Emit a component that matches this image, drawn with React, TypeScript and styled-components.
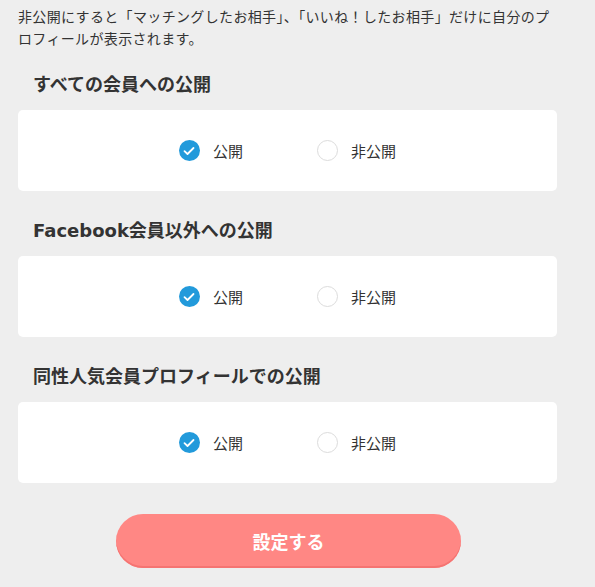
import styled, { createGlobalStyle } from 'styled-components';

type Choice = 'public' | 'private';

interface SectionData {
  title: string;
  value: Choice;
}

const sections: SectionData[] = [
  { title: 'すべての会員への公開', value: 'public' },
  { title: 'Facebook会員以外への公開', value: 'public' },
  { title: '同性人気会員プロフィールでの公開', value: 'public' },
];

function RadioOption({ label, checked }: { label: string; checked: boolean }) {
  return (
    <S.Option>
      <S.Circle $checked={checked}>
        {checked && (
          <svg width="12" height="10" viewBox="0 0 12 10">
            <path d="M1.5 5.2 L4.5 8 L10.5 2" fill="none" stroke="#fff" strokeWidth="1.8" strokeLinecap="round" strokeLinejoin="round" />
          </svg>
        )}
      </S.Circle>
      <S.Label>{label}</S.Label>
    </S.Option>
  );
}

export default function App() {
  return (
    <S.Page>
      <GlobalStyle />
      <S.Intro>
        非公開にすると「マッチングしたお相手」、「いいね！したお相手」だけに自分のプロフィールが表示されます。
      </S.Intro>
      {sections.map((s) => (
        <S.Section key={s.title}>
          <S.Heading>{s.title}</S.Heading>
          <S.Card>
            <RadioOption label="公開" checked={s.value === 'public'} />
            <RadioOption label="非公開" checked={s.value === 'private'} />
          </S.Card>
        </S.Section>
      ))}
      <S.ButtonRow>
        <S.Submit>設定する</S.Submit>
      </S.ButtonRow>
    </S.Page>
  );
}

const GlobalStyle = createGlobalStyle`
  html, body {
    margin: 0;
    padding: 0;
    background: #eeeeee;
  }
  body {
    font-family: "Liberation Sans", "Noto Sans CJK JP", sans-serif;
    color: #333;
  }
`;

const S = {
  Page: styled.div`
    width: 539px;
    padding: 6px 0 0 18px;
    min-height: 581px;
    background: #eeeeee;
  `,
  Intro: styled.p`
    margin: 0 0 -5px;
    width: 538px;
    font-size: 14px;
    line-height: 22px;
    letter-spacing: 0.35px;
    color: #333;
  `,
  Section: styled.div`
    display: flex;
    flex-direction: column;
  `,
  Heading: styled.h2`
    margin: 28px 0 13px;
    padding-left: 15px;
    line-height: 24px;
    font-family: "DejaVu Sans", "Noto Sans CJK JP", sans-serif;
    font-size: 18px;
    font-weight: bold;
    color: #333;
  `,
  Card: styled.div`
    height: 81px;
    background: #fff;
    border-radius: 5px;
    display: flex;
    align-items: center;
    justify-content: center;
    gap: 74px;
  `,
  Option: styled.label`
    display: flex;
    align-items: center;
    gap: 13px;
  `,
  Circle: styled.span<{ $checked: boolean }>`
    width: 21px;
    height: 21px;
    box-sizing: border-box;
    border-radius: 50%;
    display: flex;
    align-items: center;
    justify-content: center;
    background: ${({ $checked }) => ($checked ? '#229adb' : '#fff')};
    border: ${({ $checked }) => ($checked ? 'none' : '1px solid #dcdcdc')};
  `,
  Label: styled.span`
    font-size: 15px;
    color: #333;
  `,
  ButtonRow: styled.div`
    display: flex;
    padding: 31px 0 0 98px;
  `,
  Submit: styled.button`
    width: 345px;
    height: 54px;
    border: none;
    border-radius: 27px;
    background: #ff8784;
    box-shadow: inset 0 -2px 0 #f57472;
    color: #fff;
    font-family: "Liberation Sans", "Noto Sans CJK JP", sans-serif;
    font-size: 18px;
    font-weight: bold;
    cursor: pointer;
  `,
};
